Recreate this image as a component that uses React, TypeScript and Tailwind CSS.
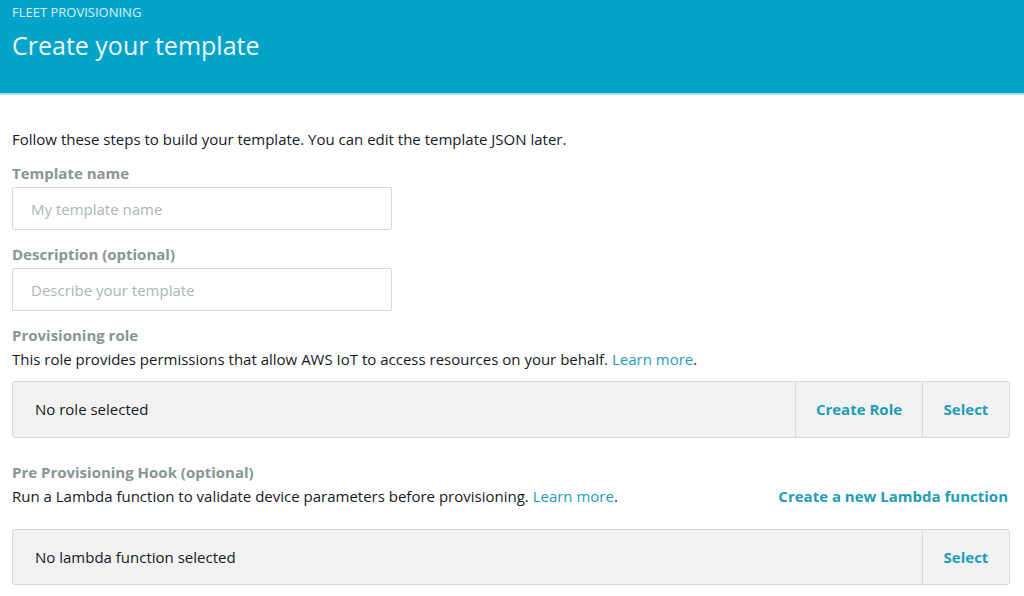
const font = { fontFamily: '"Open Sans", "Liberation Sans", sans-serif' };

function Label({ children }: { children: React.ReactNode }) {
  return <div className="text-[15px] font-bold text-[#879596] leading-[20px]">{children}</div>;
}

function TextInput({ placeholder }: { placeholder: string }) {
  return (
    <input
      placeholder={placeholder}
      className="mt-[4px] w-[380px] h-[43px] border border-[#d5dbdb] rounded-[2px] px-[18px] text-[15px] placeholder:text-[#aab7b8] outline-none"
    />
  );
}

export default function App() {
  return (
    <div className="w-[1024px] h-[596px] bg-white overflow-hidden text-[#16191f]" style={font}>
      <header className="bg-[#04a3c9] h-[95px] px-[12px] pt-[3px] border-b-2 border-[#a6e3f1]">
        <div className="text-[13px] text-[#d7f1f8] leading-[18px]">FLEET PROVISIONING</div>
        <h1 className="text-[25px] text-[#eaf8fb] leading-[34px] mt-[7px]">Create your template</h1>
      </header>

      <main className="px-[12px] pt-[33px]">
        <p className="text-[15px] leading-[22px]">
          Follow these steps to build your template. You can edit the template JSON later.
        </p>

        <div className="mt-[13px]">
          <Label>Template name</Label>
          <TextInput placeholder="My template name" />
        </div>

        <div className="mt-[14px]">
          <Label>Description (optional)</Label>
          <TextInput placeholder="Describe your template" />
        </div>

        <div className="mt-[14px]">
          <Label>Provisioning role</Label>
          <p className="text-[15px] leading-[22px] mt-[3px]">
            This role provides permissions that allow AWS IoT to access resources on your behalf.{" "}
            <a className="text-[#1e9cb8]">Learn more</a>.
          </p>
          <div className="mt-[11px] w-[998px] h-[57px] flex bg-[#f2f2f2] border border-[#d5dbdb] rounded-[3px]">
            <div className="flex-1 flex items-center px-[22px] text-[15px]">No role selected</div>
            <button className="w-[127px] border-l border-[#d5dbdb] text-[15px] font-bold text-[#1e9cb8]">
              Create Role
            </button>
            <button className="w-[87px] border-l border-[#d5dbdb] text-[15px] font-bold text-[#1e9cb8]">
              Select
            </button>
          </div>
        </div>

        <div className="mt-[24px]">
          <Label>Pre Provisioning Hook (optional)</Label>
          <div className="flex items-end w-[998px] mt-[3px]">
            <p className="flex-1 text-[15px] leading-[22px]">
              Run a Lambda function to validate device parameters before provisioning.{" "}
              <a className="text-[#1e9cb8]">Learn more</a>.
            </p>
            <a className="text-[15px] font-bold text-[#1e9cb8] leading-[22px] mr-[2px]">Create a new Lambda function</a>
          </div>
          <div className="mt-[22px] w-[998px] h-[56px] flex bg-[#f2f2f2] border border-[#d5dbdb] rounded-[3px]">
            <div className="flex-1 flex items-center px-[22px] text-[15px]">No lambda function selected</div>
            <button className="w-[87px] border-l border-[#d5dbdb] text-[15px] font-bold text-[#1e9cb8]">
              Select
            </button>
          </div>
        </div>
      </main>
    </div>
  );
}
